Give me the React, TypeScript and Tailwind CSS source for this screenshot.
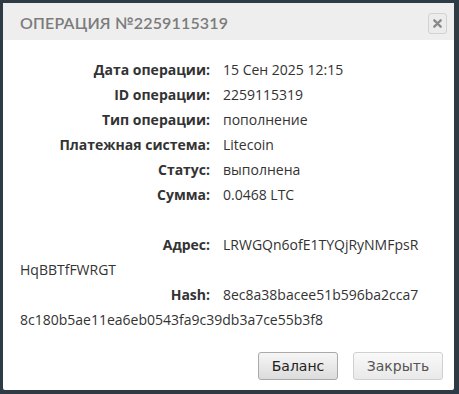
const rows = [
  { label: "Дата операции:", value: "15 Сен 2025 12:15" },
  { label: "ID операции:", value: "2259115319" },
  { label: "Тип операции:", value: "пополнение" },
  { label: "Платежная система:", value: "Litecoin" },
  { label: "Статус:", value: "выполнена" },
  { label: "Сумма:", value: "0.0468 LTC" },
];

function Row({ label, children }: { label: string; children: React.ReactNode }) {
  return (
    <div className="leading-[25px]">
      <span className="inline-block w-[190px] text-right font-bold">{label}</span>
      <span className="ml-[13px]">{children}</span>
    </div>
  );
}

export default function App() {
  return (
    <div className="w-[459px] h-[394px] bg-[#2e3b44] pt-[3px] px-[3px] pb-[3px]">
      <div className="w-[451px] h-[387px] bg-white rounded-[2px] flex flex-col">
        <div className="h-[37px] bg-[#eeeeee] flex items-center justify-between pl-[17px] pr-[7px]">
          <h1 className="mt-[3px] text-[16px] tracking-[0.01em] text-[#7b7b7b] font-['Lato',sans-serif] font-semibold">
            ОПЕРАЦИЯ №2259115319
          </h1>
          <button className="w-[19px] h-[21px] mt-[3px] rounded-[3px] border border-[#d2d2d2] bg-[#ececec] flex items-center justify-center text-[#8a8a8a]">
            <svg width="9" height="9" viewBox="0 0 10 10">
              <path d="M1.5 1.5 L8.5 8.5 M8.5 1.5 L1.5 8.5" stroke="currentColor" strokeWidth="2.6" strokeLinecap="round" />
            </svg>
          </button>
        </div>
        <div className="pt-[17px] pl-[17px] pr-[14px] text-[14px] text-[#333] font-['Open_Sans',sans-serif]">
          {rows.map((r) => (
            <Row key={r.label} label={r.label}>
              {r.value}
            </Row>
          ))}
          <div className="h-[25px]" />
          <Row label="Адрес:">
            LRWGQn6ofE1TYQjRyNMFpsR
            <br />
            HqBBTfFWRGT
          </Row>
          <Row label="Hash:">
            8ec8a38bacee51b596ba2cca7
            <br />
            8c180b5ae11ea6eb0543fa9c39db3a7ce55b3f8
          </Row>
        </div>
        <div className="mt-auto mb-[10px] flex justify-end gap-[15px] pr-[11px] font-['DejaVu_Sans',sans-serif] text-[14px]">
          <button className="h-[28px] w-[80px] rounded-[3px] border border-[#a9a9a9] bg-gradient-to-b from-[#f6f6f6] to-[#dcdcdc] text-[#222]">
            Баланс
          </button>
          <button className="h-[28px] w-[90px] rounded-[3px] border border-[#d0d0d0] bg-gradient-to-b from-[#f9f9f9] to-[#e9e9e9] text-[#555]">
            Закрыть
          </button>
        </div>
      </div>
    </div>
  );
}
